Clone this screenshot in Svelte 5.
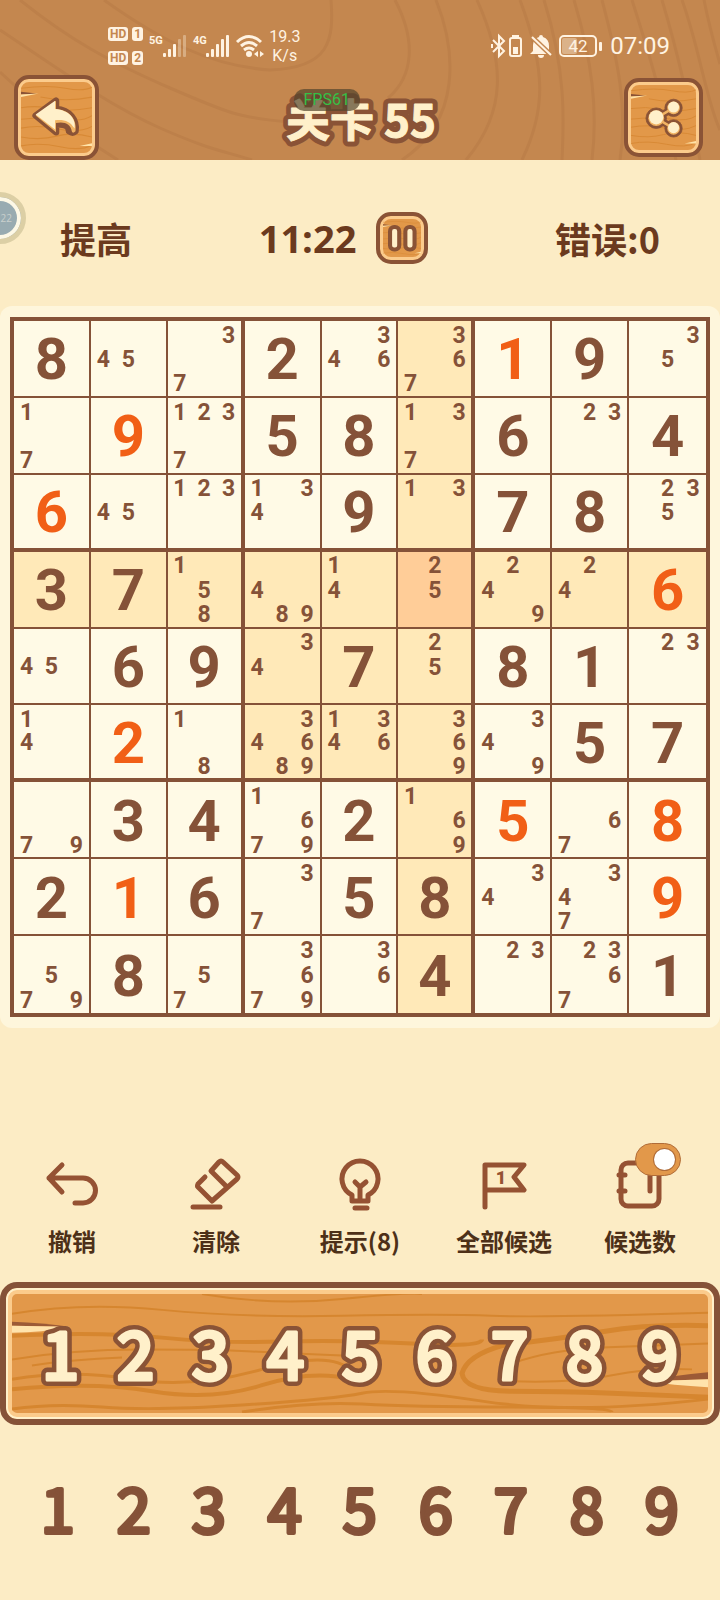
<script lang="ts">
  // One character is a fixed number, "+" marks a number the player filled in,
  // anything longer is a list of candidates.
  const rows: string[][] = [
    ["8", "45", "37", "2", "346", "367", "+1", "9", "35"],
    ["17", "+9", "1237", "5", "8", "137", "6", "23", "4"],
    ["+6", "45", "123", "134", "9", "13", "7", "8", "235"],
    ["3", "7", "158", "489", "14", "25", "249", "24", "+6"],
    ["45", "6", "9", "34", "7", "25", "8", "1", "23"],
    ["14", "+2", "18", "34689", "1346", "369", "349", "5", "7"],
    ["79", "3", "4", "1679", "2", "169", "+5", "67", "+8"],
    ["2", "+1", "6", "37", "5", "8", "34", "347", "+9"],
    ["579", "8", "57", "3679", "36", "4", "23", "2367", "1"],
  ];
  const digits = [1, 2, 3, 4, 5, 6, 7, 8, 9];

  let selected = $state({ row: 3, col: 5 });
  let notesOn = $state(true);

  function isPeer(r: number, c: number) {
    const sameBox =
      Math.floor(r / 3) === Math.floor(selected.row / 3) &&
      Math.floor(c / 3) === Math.floor(selected.col / 3);
    return r === selected.row || c === selected.col || sameBox;
  }
</script>

{#snippet tileWood()}
  <svg class="wood" viewBox="0 0 80 80" preserveAspectRatio="none" aria-hidden="true">
    <g fill="none" stroke="#d4852f" stroke-width="1.2" opacity="0.75">
      <path d="M0 7 Q30 3 50 7 T80 6" />
      <path d="M22 17 Q50 23 80 17" />
      <path d="M0 29 Q18 26 36 30 T80 29" />
      <path d="M0 42 Q30 39 50 42 T80 38" />
      <path d="M0 52 Q20 48 42 53 T80 50" />
      <path d="M0 62 Q22 66 40 61 T80 62" />
      <path d="M0 72 Q20 68 44 73 T80 71" />
    </g>
    <path d="M0 11 L18 13 L0 14z" fill="#8a5336" />
    <path d="M0 14 L20 13 L0 17z" fill="#ffe3a8" />
    <path d="M80 69 L66 72 L80 72z" fill="#ffe3a8" />
  </svg>
{/snippet}

<div class="game">
  <header class="header">
    <svg class="grain" viewBox="0 0 720 160" preserveAspectRatio="none" aria-hidden="true">
      <g fill="none" stroke="#bd804a" stroke-width="3">
        <path d="M20 0 C70 40 110 62 170 88 S240 118 290 122" />
        <path d="M0 30 C60 70 110 106 160 128 S220 150 252 160" />
        <path d="M104 0 C160 40 210 66 270 70 C330 68 334 40 331 0" />
        <path d="M0 72 C40 110 80 136 118 160" />
        <path d="M395 0 C416 40 414 76 388 98" />
        <path d="M436 0 C456 50 462 120 402 160" />
        <path d="M477 0 C504 60 508 110 466 160" />
        <path d="M520 0 C546 70 546 110 522 160" />
        <path d="M544 0 C566 70 564 120 562 160" />
        <path d="M574 0 C592 60 598 110 592 160" />
        <path d="M602 0 C618 60 628 110 620 160" />
        <path d="M632 0 C648 50 660 90 676 160" />
        <path d="M662 0 C680 60 690 110 700 160" />
        <path d="M682 0 C700 50 706 100 720 130" />
        <path d="M704 0 C710 30 716 50 720 64" />
      </g>
    </svg>

    <div class="status">
      <div class="sims">
        <span class="sim"><b>HD</b><b>1</b></span>
        <span class="sim"><b>HD</b><b>2</b></span>
      </div>
      <svg class="signals" width="114" height="28" viewBox="0 0 114 28" aria-hidden="true">
        <g fill="#fff3e2">
          <text x="-2" y="12" class="net">5G</text>
          <rect x="12" y="21" width="3" height="4" rx="1" />
          <rect x="17" y="17" width="3" height="8" rx="1" />
          <rect x="22" y="12" width="3" height="13" rx="1" />
          <rect x="27" y="7" width="3" height="18" rx="1" opacity="0.35" />
          <rect x="32" y="3" width="3" height="22" rx="1" opacity="0.35" />
          <text x="42" y="12" class="net">4G</text>
          <rect x="55" y="21" width="3" height="4" rx="1" />
          <rect x="60" y="17" width="3" height="8" rx="1" />
          <rect x="65" y="12" width="3" height="13" rx="1" />
          <rect x="70" y="7" width="3" height="18" rx="1" />
          <rect x="75" y="3" width="3" height="22" rx="1" />
          <circle cx="98" cy="22" r="3" />
          <path d="M107 19v6l-4-3zM109 19v6l4-3z" />
        </g>
        <g fill="none" stroke="#fff3e2" stroke-width="3">
          <path d="M86 10 Q98 -1 110 10" />
          <path d="M90 14 Q98 7 106 14" />
          <path d="M93 18 Q98 14 103 18" />
        </g>
      </svg>
      <span class="speed">19.3<br />K/s</span>

      <svg class="device" width="112" height="26" viewBox="0 0 112 26" aria-hidden="true">
        <g fill="none" stroke="#fff3e2" stroke-width="2">
          <path d="M2 7 L13 18 L8 23 V3 L13 8 L2 19" />
          <path d="M1 11 v4" />
          <rect x="19" y="5" width="11" height="18" rx="2" />
          <rect x="69" y="3" width="36" height="20" rx="4" />
        </g>
        <g fill="#fff3e2">
          <rect x="21" y="2" width="7" height="2" />
          <rect x="22" y="14" width="5" height="7" />
          <path d="M50 2 a2 2 0 0 1 2 2 q6 2 6 9 v5 l2 3 H39 l3-3 v-6 q0-6 6-8 a2 2 0 0 1 2-2z" />
          <path d="M47 22 h6 a3 3 0 0 1 -6 0z" />
          <rect x="71" y="5" width="15" height="16" rx="2" opacity="0.4" />
          <rect x="108" y="9" width="3" height="9" rx="1" />
          <text x="87" y="19" text-anchor="middle" class="charge">42</text>
        </g>
        <path d="M40 3 L61 23" stroke="#c4874f" stroke-width="5" />
        <path d="M41 4 L60 22" stroke="#fff3e2" stroke-width="2" />
      </svg>
      <time class="clock">07:09</time>
    </div>

    <div class="titlebar">
      <button class="tile back" aria-label="返回">
        {@render tileWood()}
        <svg class="tile-icon" viewBox="0 0 54 44" aria-hidden="true">
          <path
            d="M5 20 L27 4 V13 C42 14 50 25 48 37 Q45 40 41 37 C41 31 36 29 27 30 V38z"
            fill="#8a5336" stroke="#8a5336" stroke-width="7" stroke-linejoin="round"
          />
          <path
            d="M5 20 L27 4 V13 C42 14 50 25 48 37 Q45 40 44 37 C43 29 36 26 27 28 V38z"
            fill="#f2b463"
          />
          <path d="M5 19 L26 4 V13 C41 14 49 24 47 34 C42 26 36 24 26 25 V35z" fill="#fff0ca" />
        </svg>
      </button>
      <h1 class="title" aria-label="关卡 55">
        <svg width="172" height="64" viewBox="0 0 172 64">
          <use href="#level-name" class="outline" />
          <text id="level-name" x="85" y="51" text-anchor="middle">关卡 55</text>
        </svg>
        <span class="fps">FPS61</span>
      </h1>
      <button class="tile share" aria-label="分享">
        {@render tileWood()}
        <svg class="tile-icon" viewBox="0 0 54 44" aria-hidden="true">
          <g fill="#8a5336" stroke="#8a5336">
            <path d="M18 23 L39 11 M18 23 L39 35" stroke-width="9" />
            <circle cx="18" cy="23" r="13" />
            <circle cx="40" cy="10" r="11" />
            <circle cx="40" cy="36" r="11" />
          </g>
          <path d="M18 23 L40 10 M18 23 L40 36" stroke="#f2b463" stroke-width="3" />
          <g fill="#f2b463">
            <circle cx="18" cy="23" r="10" />
            <circle cx="40" cy="10" r="8" />
            <circle cx="40" cy="36" r="8" />
          </g>
          <g fill="#fff0ca">
            <circle cx="18" cy="22" r="9" />
            <circle cx="40" cy="9" r="7" />
            <circle cx="40" cy="35" r="7" />
          </g>
        </svg>
      </button>
    </div>
  </header>

  <section class="stats">
    <span class="level">提高</span>
    <div class="timer">
      <time>11:22</time>
      <button class="tile pause" aria-label="暂停">
        {@render tileWood()}
        <svg class="tile-icon" viewBox="0 0 28 28" aria-hidden="true">
          <g fill="#fff0ca" stroke="#8a5336" stroke-width="4">
            <rect x="2" y="3" width="9" height="22" rx="4" />
            <rect x="17" y="3" width="9" height="22" rx="4" />
          </g>
        </svg>
      </button>
    </div>
    <span class="mistakes">错误:0</span>
    <span class="bubble">22</span>
  </section>

  <main class="card">
    <div class="board">
      {#each rows as row, r}
        {#each row as cell, c}
          <button
            class="cell"
            class:peer={isPeer(r, c)}
            class:selected={selected.row === r && selected.col === c}
            class:box-right={c === 2 || c === 5}
            class:box-bottom={r === 2 || r === 5}
            class:last-col={c === 8}
            class:last-row={r === 8}
            onclick={() => (selected = { row: r, col: c })}
          >
            {#if cell.startsWith("+")}
              <span class="value filled">{cell.slice(1)}</span>
            {:else if cell.length === 1}
              <span class="value">{cell}</span>
            {:else}
              <span class="notes">
                {#each digits as d}
                  <span>{cell.includes(String(d)) ? d : ""}</span>
                {/each}
              </span>
            {/if}
          </button>
        {/each}
      {/each}
    </div>
  </main>

  <nav class="tools">
    <button class="tool">
      <svg viewBox="0 0 60 60" aria-hidden="true">
        <path d="M20 10 L7 23 L20 37 M7 23 H41 A12 12 0 0 1 41 48 H33" />
      </svg>
      <span>撤销</span>
    </button>
    <button class="tool">
      <svg viewBox="0 0 60 60" aria-hidden="true">
        <path d="M19 22 L12 29 Q11 31 12 32 L26 46 L51 24 Q53 22 51 20 L37 7 Q35 5 33 7 L25 16 L41 32" />
        <path d="M7 52 H34" />
      </svg>
      <span>清除</span>
    </button>
    <button class="tool">
      <svg viewBox="0 0 60 60" aria-hidden="true">
        <path d="M22 46 V40 A18 18 0 1 1 38 40 V46z" />
        <path d="M25 27 L30 32 L36 27 M30 32 V45 M25 53 H37" />
      </svg>
      <span>提示(8)</span>
    </button>
    <button class="tool">
      <svg viewBox="0 0 60 60" aria-hidden="true">
        <path d="M11 52 V10 H50 L40 22 L50 35 H11" />
        <text x="27" y="29" text-anchor="middle">1</text>
      </svg>
      <span>全部候选</span>
    </button>
    <label class="tool">
      <svg viewBox="0 0 60 60" aria-hidden="true">
        <rect x="11" y="8" width="38" height="43" rx="7" />
        <path d="M9 20 H15 M9 36 H15 M40 10 V36" />
      </svg>
      <input class="switch" type="checkbox" role="switch" bind:checked={notesOn} />
      <span>候选数</span>
    </label>
  </nav>

  <section class="pad">
    <svg class="wood" viewBox="0 0 696 120" preserveAspectRatio="none" aria-hidden="true">
      <g fill="none" stroke="#d6862f" stroke-width="2">
        <path d="M0 20 Q70 8 150 16 T330 22 T480 22 T696 19" />
        <path d="M190 0 Q260 12 330 5 T410 0" />
        <path d="M0 42 Q90 38 150 44 T270 48 T400 50 T470 46" stroke-width="4" />
        <path d="M0 66 Q60 56 130 56 T240 58 T330 62" />
        <path d="M20 72 Q60 66 110 64" />
        <path d="M0 86 Q60 76 120 86 T250 76 T340 78" stroke-width="3" />
        <path d="M0 96 Q80 88 140 98 T250 92 T340 86" stroke-width="4" />
        <path d="M0 116 Q40 110 90 114 T230 112 T350 100 T470 108 T696 106" stroke-width="3" />
        <path d="M230 119 Q300 108 350 111 T500 114 T600 119" stroke-width="3" />
        <path d="M696 32 Q640 30 590 38 T490 52 Q455 62 450 80 Q452 98 500 98 T600 100 T696 104" stroke-width="5" />
        <path d="M696 50 Q640 52 590 54 T500 70" />
        <path d="M500 88 Q560 90 600 82 T680 76" />
      </g>
      <path d="M0 28 Q30 29 58 33 L0 32z" fill="#9c5a36" />
      <path d="M0 32 L58 33 Q30 39 0 39z" fill="#ffe3ac" />
      <path d="M696 79 Q660 82 638 88 L696 86z" fill="#9c5a36" />
      <path d="M696 86 L634 88 Q660 92 696 94z" fill="#ffe3ac" />
    </svg>
    {#each digits as d}
      <button class="key" aria-label={String(d)}>
        <svg viewBox="0 0 74 84">
          <use href="#key-{d}" class="outline" />
          <text id="key-{d}" x="37" y="68" text-anchor="middle">{d}</text>
        </svg>
      </button>
    {/each}
  </section>

  <section class="counts">
    {#each digits as d}
      <svg viewBox="0 0 74 84">
        <text x="37" y="64" text-anchor="middle">{d}</text>
      </svg>
    {/each}
  </section>
</div>

<style>
  :global(body) {
    background: #fcecc5;
  }

  .game {
    font-family: "Open Sans", "Noto Sans CJK SC", sans-serif;
    color: #6b3a1e;
    overflow: hidden;
  }

  button {
    font-family: inherit;
    color: inherit;
    border: none;
    background: none;
    padding: 0;
    cursor: pointer;
  }

  .header {
    position: relative;
    background: #c4874f;
    height: 160px;
  }

  .grain,
  .wood {
    position: absolute;
    inset: 0;
    width: 100%;
    height: 100%;
  }

  .status {
    position: relative;
    display: flex;
    align-items: center;
    box-sizing: border-box;
    height: 75px;
    padding: 16px 50px 0 108px;
    color: #fff3e2;
    font-family: Roboto, sans-serif;
  }

  .sims {
    display: flex;
    flex-direction: column;
    gap: 10px;
    margin-right: 8px;
  }

  .sim {
    display: flex;
    gap: 4px;
  }

  .sim b {
    background: #fff3e2;
    color: #c4874f;
    border-radius: 3px;
    padding: 0 2px;
    font-size: 12px;
    line-height: 14px;
  }

  .signals {
    margin-right: 4px;
    overflow: visible;
  }

  .net {
    font: bold 11px Roboto, sans-serif;
  }

  .speed {
    font-size: 16px;
    line-height: 19px;
    text-align: center;
  }

  .device {
    margin-left: auto;
    margin-right: 7px;
  }

  .charge {
    font: 17px Roboto, sans-serif;
  }

  .clock {
    font-size: 24px;
    line-height: 28px;
  }

  .titlebar {
    position: relative;
    display: flex;
    align-items: center;
    justify-content: space-between;
    height: 85px;
    padding: 0 17px 0 14px;
  }

  .tile {
    position: relative;
    flex: none;
    display: grid;
    place-items: center;
    box-sizing: border-box;
    overflow: hidden;
    background: #e2984a;
    border: 4px solid #8a5336;
    border-radius: 15px;
    box-shadow: inset 0 0 0 3px #fbcb8c;
  }

  .tile .wood {
    inset: 3px;
    width: calc(100% - 6px);
    height: calc(100% - 6px);
  }

  .tile-icon {
    position: relative;
    width: 65%;
    overflow: visible;
  }

  .back {
    width: 85px;
    height: 85px;
  }

  .share {
    width: 79px;
    height: 79px;
  }

  .share .tile-icon {
    width: 60%;
  }

  .pause {
    width: 52px;
    height: 52px;
  }

  .title {
    position: relative;
    margin: 0;
    height: 64px;
    font: bold 44px "Noto Sans CJK SC", sans-serif;
    fill: #fff0ca;
    stroke: #fff0ca;
    stroke-width: 1px;
    stroke-linejoin: round;
  }

  .title svg {
    display: block;
    overflow: visible;
  }

  .outline {
    fill: #8a5336;
    stroke: #8a5336;
    stroke-width: 11px;
  }

  .fps {
    position: absolute;
    top: 3px;
    left: 18px;
    padding: 0 10px;
    border-radius: 10px;
    background: rgba(84, 68, 44, 0.7);
    color: #35c046;
    stroke: none;
    font: 16px/22px Roboto, sans-serif;
  }

  .stats {
    position: relative;
    display: flex;
    align-items: center;
    justify-content: space-between;
    height: 136px;
    padding: 10px 60px 0;
    font-size: 36px;
    font-weight: bold;
    line-height: 52px;
  }

  .level,
  .mistakes {
    font-family: "Noto Sans CJK SC", sans-serif;
  }

  .timer {
    display: flex;
    align-items: center;
    gap: 20px;
    font-size: 38px;
  }

  .bubble {
    position: absolute;
    left: -26px;
    top: 32px;
    box-sizing: border-box;
    width: 52px;
    height: 52px;
    border: 5px solid #dccfa5;
    border-radius: 50%;
    background: #98abb1;
    box-shadow: inset 0 0 0 4px #fdf8e6;
    color: #c9d0cd;
    font-size: 10px;
    font-weight: normal;
    line-height: 42px;
    text-align: right;
    padding-right: 9px;
  }

  .card {
    padding: 11px 10px;
    border-radius: 12px;
    background: #fef6dc;
  }

  .board {
    display: grid;
    grid-template-columns: repeat(9, 1fr);
    border: 4px solid #855238;
  }

  .cell {
    display: grid;
    place-items: center;
    box-sizing: border-box;
    min-width: 0;
    aspect-ratio: 1;
    background: #fffae6;
    border: solid #855238;
    border-width: 0 2px 2px 0;
    color: #855238;
    font-family: Roboto, sans-serif;
    font-weight: bold;
  }

  .cell.peer {
    background: #ffe9b8;
  }

  .cell.selected {
    background: #ffcd98;
  }

  .cell.box-right {
    border-right-width: 4px;
  }

  .cell.box-bottom {
    border-bottom-width: 4px;
  }

  .cell.last-col {
    border-right-width: 0;
  }

  .cell.last-row {
    border-bottom-width: 0;
  }

  .value {
    padding-top: 2px;
    font-size: 58px;
    line-height: 64px;
  }

  .filled {
    color: #f15f16;
  }

  .notes {
    display: grid;
    grid-template: repeat(3, 1fr) / repeat(3, 1fr);
    align-items: center;
    box-sizing: border-box;
    width: 100%;
    height: 100%;
    padding-top: 2px;
    font-size: 23px;
    line-height: 23px;
    text-align: center;
  }

  .tools {
    display: grid;
    grid-template-columns: 9fr 9fr 9fr 9fr 8fr;
    margin-top: 127px;
    padding-right: 16px;
  }

  .tool {
    position: relative;
    display: flex;
    flex-direction: column;
    align-items: center;
    gap: 10px;
    color: #4d3018;
    font: bold 24px/32px "Noto Sans CJK SC", sans-serif;
    cursor: pointer;
  }

  .tool svg {
    width: 60px;
    height: 60px;
    fill: none;
    stroke: #955233;
    stroke-width: 5px;
    stroke-linecap: round;
    stroke-linejoin: round;
  }

  .tool text {
    font: 900 18px Roboto, sans-serif;
    fill: #955233;
    stroke: none;
  }

  .switch {
    appearance: none;
    position: absolute;
    top: -12px;
    left: calc(50% - 5px);
    box-sizing: border-box;
    width: 46px;
    height: 33px;
    margin: 0;
    padding: 5px;
    border: 1px solid #b06c38;
    border-radius: 17px;
    background: #cdb28c;
    cursor: pointer;
  }

  .switch::before {
    content: "";
    display: block;
    width: 21px;
    height: 21px;
    border-radius: 50%;
    background: #fff;
    box-shadow: 0 0 0 1px #b06c38;
  }

  .switch:checked {
    background: #e2984a;
  }

  .switch:checked::before {
    margin-left: auto;
  }

  .pad {
    position: relative;
    display: grid;
    grid-template-columns: repeat(9, 1fr);
    align-items: center;
    box-sizing: border-box;
    height: 143px;
    margin-top: 25px;
    padding: 0 17px;
    border: 6px solid #855238;
    border-radius: 17px;
    background: #e2984a;
    box-shadow:
      inset 0 0 0 2px #fff0ca,
      inset 0 0 0 6px #fbcb8c;
  }

  .pad .wood {
    inset: 6px;
    width: calc(100% - 12px);
    height: calc(100% - 12px);
  }

  .key {
    position: relative;
  }

  .key svg,
  .counts svg {
    display: block;
    width: 100%;
    overflow: visible;
    stroke-linejoin: round;
  }

  .key svg {
    font: 500 66px "Noto Sans CJK SC", sans-serif;
    fill: #fff0ca;
    stroke: #fff0ca;
    stroke-width: 3px;
  }

  .key .outline {
    stroke-width: 12px;
  }

  .counts {
    display: grid;
    grid-template-columns: repeat(9, 1fr);
    align-items: center;
    height: 124px;
    margin-top: 24px;
    padding: 0 20px;
  }

  .counts svg {
    font: 400 60px "Noto Sans CJK SC", sans-serif;
    fill: #855238;
    stroke: #855238;
    stroke-width: 4px;
  }
</style>
